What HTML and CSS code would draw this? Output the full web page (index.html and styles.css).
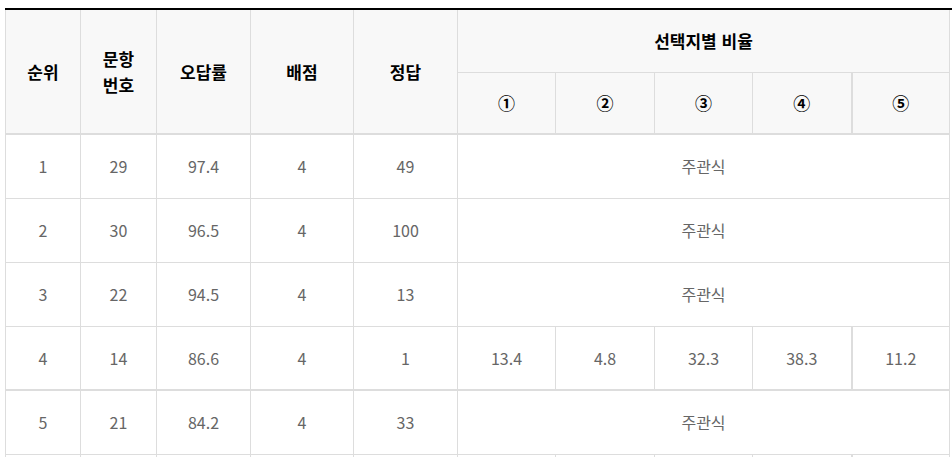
FILE: index.html
```html
<!DOCTYPE html>
<html lang="ko">
<head>
<meta charset="utf-8">
<link rel="stylesheet" href="styles.css">
</head>
<body>
<div class="wrap">
<table class="rank">
<colgroup>
<col class="c1"><col class="c2"><col class="c3"><col class="c4"><col class="c5">
<col class="c6"><col class="c7"><col class="c8"><col class="c9"><col class="c10">
</colgroup>
<thead>
<tr class="h1">
<th rowspan="2">순위</th>
<th rowspan="2">문항<br>번호</th>
<th rowspan="2">오답률</th>
<th rowspan="2">배점</th>
<th rowspan="2">정답</th>
<th colspan="5">선택지별 비율</th>
</tr>
<tr class="h2">
<th>①</th><th>②</th><th>③</th><th>④</th><th class="thick">⑤</th>
</tr>
</thead>
<tbody>
<tr><td>1</td><td>29</td><td>97.4</td><td>4</td><td>49</td><td colspan="5">주관식</td></tr>
<tr><td>2</td><td>30</td><td>96.5</td><td>4</td><td>100</td><td colspan="5">주관식</td></tr>
<tr><td>3</td><td>22</td><td>94.5</td><td>4</td><td>13</td><td colspan="5">주관식</td></tr>
<tr class="sep"><td>4</td><td>14</td><td>86.6</td><td>4</td><td>1</td><td>13.4</td><td>4.8</td><td>32.3</td><td>38.3</td><td class="thick">11.2</td></tr>
<tr><td>5</td><td>21</td><td>84.2</td><td>4</td><td>33</td><td colspan="5">주관식</td></tr>
<tr class="partial"><td></td><td></td><td></td><td></td><td></td><td></td><td></td><td></td><td></td><td class="thick"></td></tr>
</tbody>
</table>
</div>
</body>
</html>
```
FILE: styles.css
```css
html, body {
  margin: 0;
  padding: 0;
  background: #fff;
}
body {
  padding: 8px 0 0 5px;
  font-family: "Noto Sans CJK KR", "Noto Sans", sans-serif;
  overflow: hidden;
  height: 449px;
}
.wrap {
  width: 1000px;
  border-top: 2px solid #000;
}
.rank {
  border-collapse: collapse;
  table-layout: fixed;
  width: 945px;
}
.c1 { width: 75px; }
.c2 { width: 76px; }
.c3 { width: 94px; }
.c4 { width: 103px; }
.c5 { width: 104px; }
.c6 { width: 98px; }
.c7 { width: 99px; }
.c8 { width: 98px; }
.c9 { width: 99px; }
.c10 { width: 98px; }
.rank th, .rank td {
  border: 1px solid #ddd;
  text-align: center;
  vertical-align: middle;
  padding: 0;
}
.rank thead tr:first-child th {
  border-top: 0;
}
.rank th {
  background: #f8f8f8;
  color: #000;
  font-weight: bold;
  font-size: 17px;
  line-height: 26px;
}
.h1 { height: 62px; }
.h2 { height: 62px; }
.rank thead tr:last-child th,
.rank thead th[rowspan] {
  border-bottom: 2px solid #ddd;
}
.rank tbody tr { height: 64px; }
.rank td {
  font-size: 16px;
  color: #666;
  font-weight: 400;
}
.rank .thick {
  border-left: 2px solid #ddd;
}
.rank .sep td {
  border-bottom: 2px solid #ddd;
}
```
